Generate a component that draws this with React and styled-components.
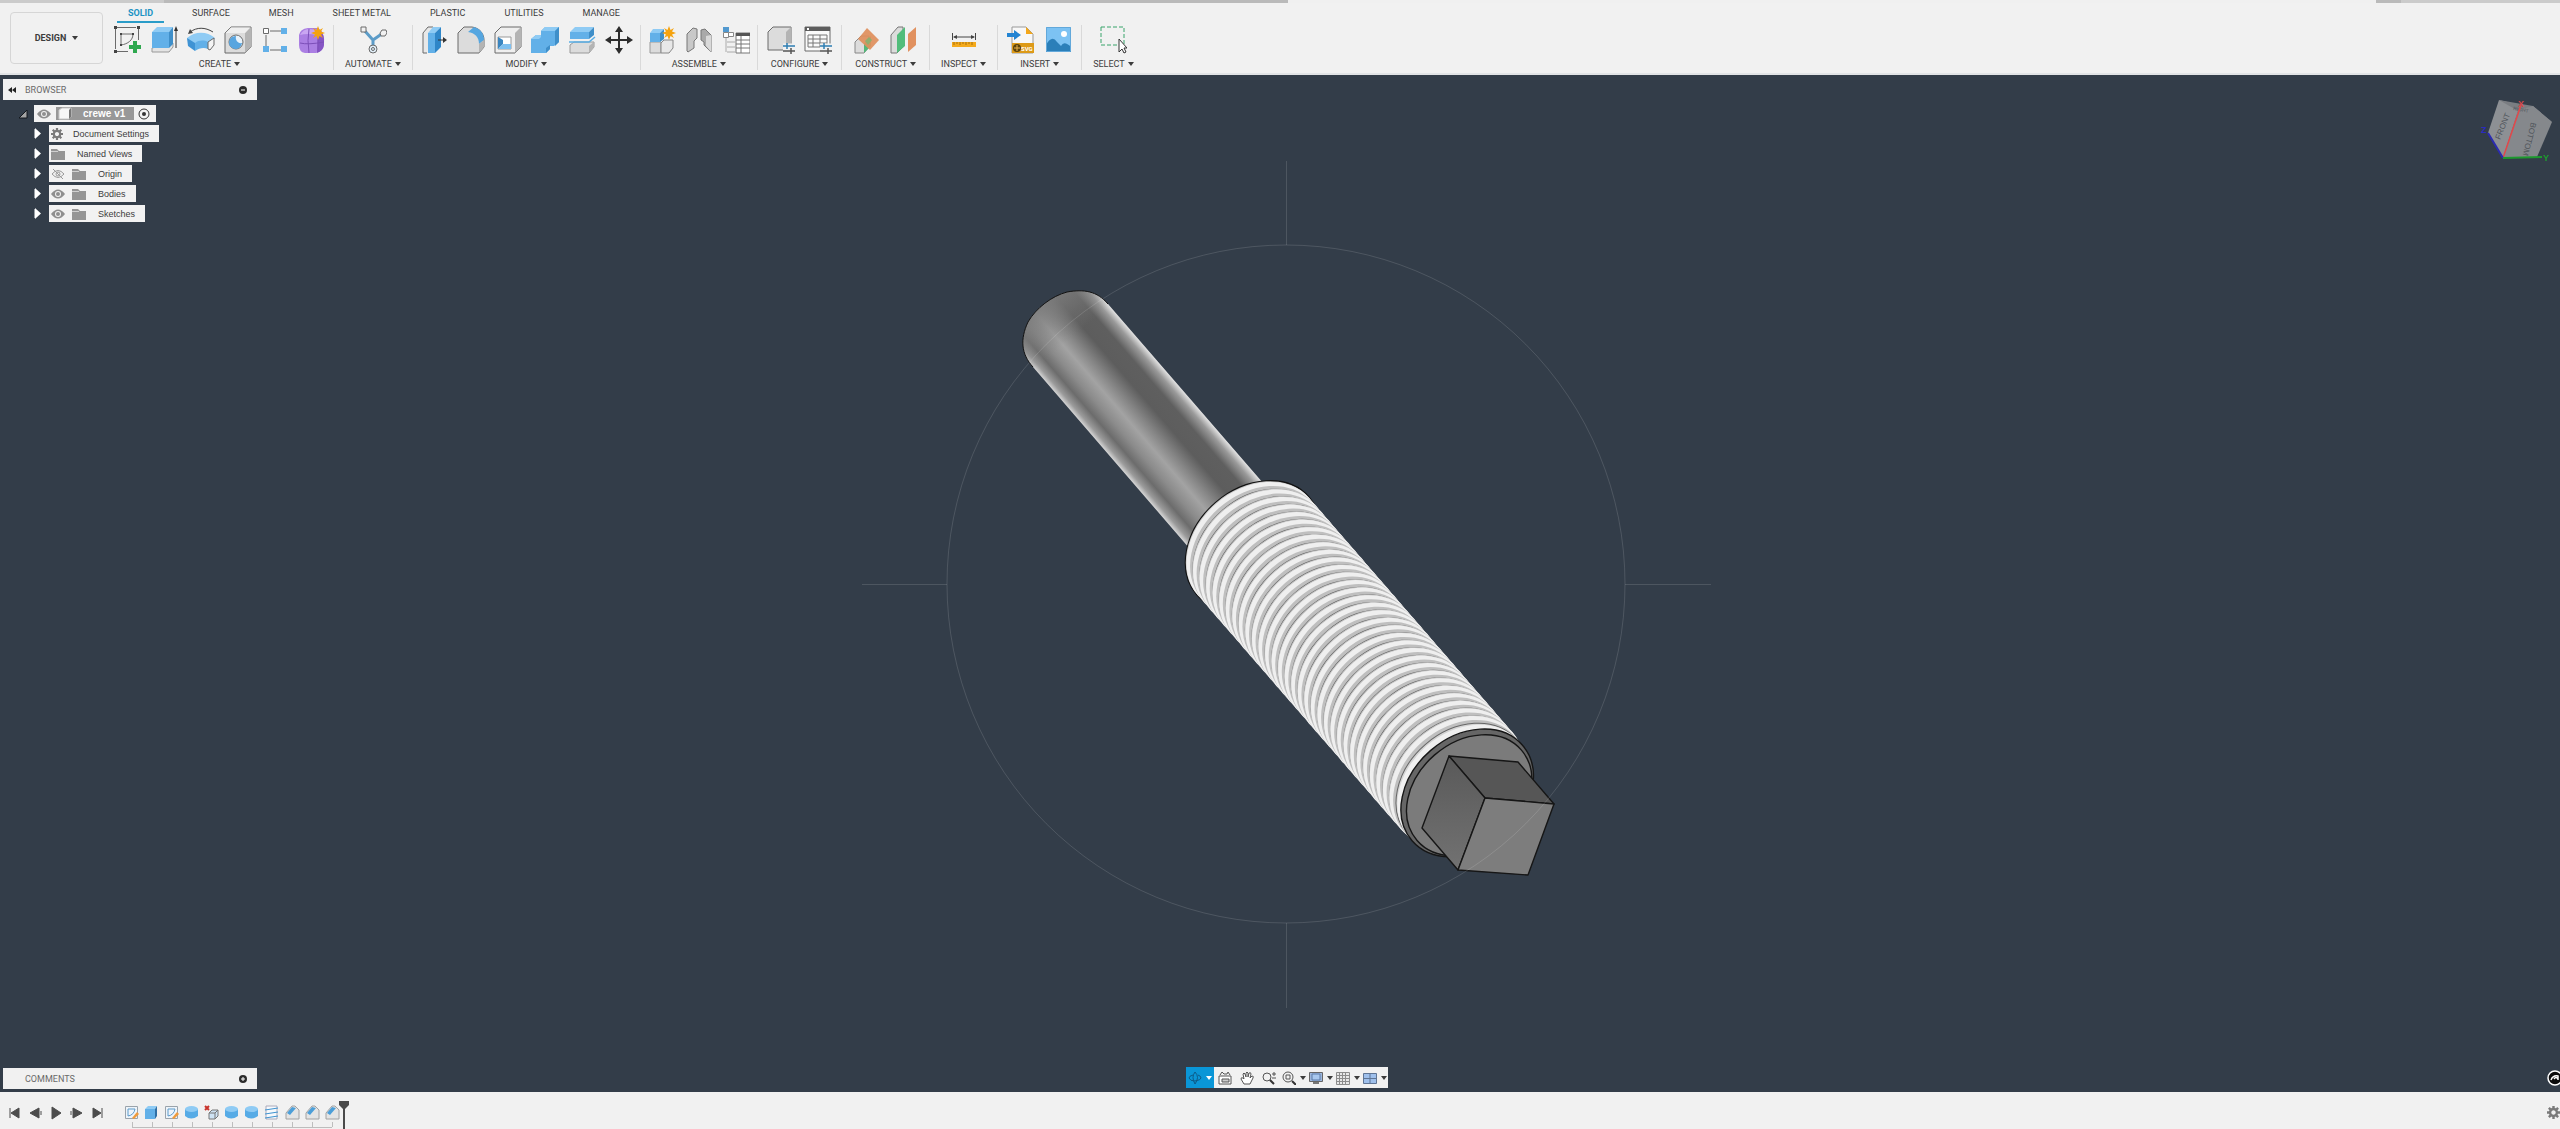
import { useState } from "react";
import styled, { createGlobalStyle, css } from "styled-components";

const GlobalStyle = createGlobalStyle`
  * {
    box-sizing: border-box;
  }
  html, body, #root {
    height: 100%;
    margin: 0;
  }
  body {
    overflow: hidden;
    font-family: Roboto, "Liberation Sans", sans-serif;
    font-size: 9px;
    color: #3c3c3c;
  }
  button {
    font: inherit;
    color: inherit;
    background: none;
    border: none;
    padding: 0;
    margin: 0;
    cursor: pointer;
  }
  svg {
    display: block;
    flex-shrink: 0;
  }
`;

const Shell = styled.div`
  display: flex;
  flex-direction: column;
  height: 100vh;
  background: #333d49;
`;

/* ---------- toolbar ---------- */

const TitleStrip = styled.div`
  display: flex;
  height: 3px;
  background: #f0f0f0;
`;
const StripPart = styled.div`
  width: ${({ $width }) => $width};
  margin-left: ${({ $push }) => ($push ? "auto" : "0")};
  background: ${({ $light }) => ($light ? "#cbcbcb" : "#bababa")};
`;

const Toolbar = styled.header`
  display: flex;
  height: 72px;
  background: #f1f1f1;
  border-bottom: 2px solid #e2e4e6;
`;

const WorkspaceButton = styled.button`
  display: flex;
  align-items: center;
  justify-content: center;
  gap: 6px;
  width: 93px;
  height: 52px;
  margin: 9px 2px 0 10px;
  border: 1px solid #d6d6d6;
  border-radius: 4px;
  font-weight: 700;
`;

const Caret = styled.span`
  display: inline-block;
  border: 3px solid transparent;
  border-top: 4px solid ${({ $light }) => ($light ? "#fff" : "#3c3c3c")};
  border-bottom: none;
`;

const Ribbon = styled.div`
  display: flex;
  flex-direction: column;
`;
const Tabs = styled.nav`
  display: flex;
  gap: 17px;
  height: 20px;
  padding-left: 12px;
`;
const Tab = styled.button`
  padding: 2px 11px 0;
  height: 20px;
  border-bottom: 2px solid transparent;
  ${({ $active }) =>
    $active &&
    css`
      color: #1b93c4;
      font-weight: 700;
      border-color: #2a9cc8;
    `}
`;

const Groups = styled.div`
  display: flex;
  height: 47px;
  padding: 2px 0 0 1px;
`;
const Group = styled.section`
  display: flex;
  flex-direction: column;
  align-items: center;
  justify-content: space-between;
  padding: 0 ${({ $pair }) => ($pair ? "9px" : "7px")};
  border-right: 1px solid ${({ $last }) => ($last ? "transparent" : "#d9d9d9")};
`;
const Tools = styled.div`
  display: flex;
  gap: 9px;
`;
const Tool = styled.button`
  width: 28px;
  height: 30px;
`;
const GroupLabel = styled.button`
  display: flex;
  align-items: center;
  gap: 3px;
  height: 13px;
  padding: 0 4px;
`;

/* ---------- viewport ---------- */

const Viewport = styled.main`
  position: relative;
  flex: 1;
  min-height: 0;
  display: flex;
  align-items: center;
  justify-content: center;
  padding-left: 12px;
  overflow: hidden;
`;

const BrowserPane = styled.aside`
  position: absolute;
  top: 4px;
  left: 3px;
  width: 254px;
`;
const PanelBar = styled.div`
  display: flex;
  align-items: center;
  justify-content: space-between;
  height: 21px;
  padding: 0 10px 0 4px;
  background: #f1f1f1;
  color: #6a6a6a;
`;
const PanelTitle = styled.div`
  display: flex;
  align-items: center;
  gap: 8px;
`;
const CommentsBar = styled(PanelBar)`
  position: absolute;
  left: 3px;
  bottom: 3px;
  width: 254px;
`;

const Tree = styled.ul`
  display: flex;
  flex-direction: column;
  gap: 3px;
  margin: 5px 0 0;
  padding: 0;
  list-style: none;
  font: 9px "Liberation Sans", sans-serif;
`;
const Row = styled.li`
  display: flex;
  align-items: center;
  gap: ${({ $root }) => ($root ? "6px" : "7px")};
  padding-left: ${({ $root }) => ($root ? "15px" : "30px")};
`;
const Node = styled.div`
  display: flex;
  align-items: center;
  gap: 7px;
  height: 17px;
  padding: 0 8px 0 2px;
  background: #f2f2f2;
`;
const NodeName = styled.span`
  padding: ${({ $wide }) => ($wide ? "0 2px 0 5px" : "0 2px 0 3px")};
`;
const RootNode = styled(Node)`
  gap: 4px;
  padding: 0 6px 0 3px;
`;
const RootName = styled.span`
  display: flex;
  align-items: center;
  gap: 11px;
  height: 13px;
  margin-left: 1px;
  padding: 0 9px 0 2px;
  background: #989898;
  color: #fff;
  font-size: 10px;
  font-weight: 700;
`;

const CubeBox = styled.div`
  position: absolute;
  top: 15px;
  right: 0;
`;

const NavBar = styled.div`
  position: absolute;
  bottom: 4px;
  left: calc(50% - 94px);
  display: flex;
  height: 21px;
  background: #f1f1f1;
`;
const NavButton = styled.button`
  display: flex;
  align-items: center;
  justify-content: center;
  gap: 4px;
  height: 21px;
  width: ${({ $menu }) => ($menu ? "27px" : "22px")};
  ${({ $active }) =>
    $active &&
    css`
      width: 28px;
      background: #0a96d7;
    `}
`;
const HelpBadge = styled.button`
  position: absolute;
  right: -3px;
  bottom: 6px;
`;

/* ---------- timeline ---------- */

const Timeline = styled.footer`
  display: flex;
  align-items: flex-start;
  height: 37px;
  background: #f1f1f1;
`;
const Playback = styled.div`
  display: flex;
  gap: 5px;
  padding: 13px 0 0 6px;
`;
const Features = styled.div`
  display: flex;
  flex-direction: column;
  gap: 2px;
  margin-left: 18px;
  padding-top: 13px;
`;
const FeatureRow = styled.div`
  display: flex;
  gap: 4px;
`;
const Marker = styled.div`
  margin: 9px 0 0 -2px;
`;
const SettingsButton = styled.button`
  margin: 14px 0 0 auto;
`;

/* ---------- icons ---------- */

const BLUE = "#62b0e8";
const BLUE_TOP = "#8fcbf4";
const BLUE_SIDE = "#3f8fc9";
const GREY = "#dcdcdc";
const GREY_SIDE = "#b4b4b4";
const LINE = "#6b6b6b";

const Star = ({ x, y }) => (
  <path
    transform={`translate(${x} ${y})`}
    fill="#f5a30f"
    d="M0-7 1.500-3 5-5 3-1.500 7 0 3 1.500 5 5 1.500 3 0 7-1.500 3-5 5-3 1.500-7 0-3-1.500-5-5-1.500-3Z"
  />
);

const Sliders = () => (
  <g strokeWidth="1.5">
    <path stroke="#f1f1f1" strokeWidth="5" d="M16 20H28M16 25H28" />
    <path stroke="#2e7eb2" d="M16 20H28M20 17v6" />
    <path stroke="#555" d="M16 25H28M24 22v6" />
  </g>
);

const icons = {
  sketch: (
    <>
      <path d="M4 1.500H23M2.500 3V23M4 25.500H15M25.500 3V14" stroke={LINE} fill="none" />
      <path d="M1 0h3v3H1zM24 0h3v3h-3zM1 24h3v3H1z" fill="#444" />
      <path d="M8 8H20C20 14 15 18 8 19Z" fill="none" stroke={LINE} />
      <path d="M7 7h2v2H7zM19 7h2v2h-2zM7 18h2v2H7z" fill="#444" />
      <path d="M20 15h4v4h4v4h-4v4h-4v-4h-4v-4h4z" fill="#2fa84f" />
    </>
  ),
  extrude: (
    <>
      <path d="M2 22 2 26H19L23 21V17Z" fill="#e4e4e4" stroke="#999" />
      <path d="M2 6H19V22H2Z" fill={BLUE} />
      <path d="M2 6 7 1H23L19 6Z" fill={BLUE_TOP} />
      <path d="M19 6 23 1V18L19 22Z" fill={BLUE_SIDE} />
      <path d="M26 4V22" stroke="#333" />
      <path d="M26 0 28 5H24Z" fill="#333" />
    </>
  ),
  revolve: (
    <>
      <path d="M3 6C10 1 18 1 26 6" fill="none" stroke="#444" />
      <path d="M1 8 3 3 6 7Z" fill="#444" />
      <path d="M0 12C8 5 20 5 28 12L26 15 20 20C16 17 11 17 8 20L1 15Z" fill={BLUE_TOP} />
      <path d="M0 12 8 17V25L1 20Z" fill="#3f93d4" />
      <path d="M8 17C12 14 17 14 21 16V23C17 21 12 22 8 25Z" fill={BLUE} />
      <path d="M21 16 27 12V19L23 24 21 23Z" fill="#f4f4f4" stroke={LINE} />
    </>
  ),
  hole: (
    <>
      <path d="M1 7 7 1H27V21L21 27H1Z" fill={GREY} stroke={LINE} />
      <path d="M21 7 27 1V21L21 27Z" fill={GREY_SIDE} />
      <path d="M1.500 7 7 1.500H26L21 7Z" fill="#efefef" />
      <circle cx="12" cy="16" r="7" fill="#e8f2fa" stroke={LINE} />
      <path d="M12 10A6.500 6.500 0 1 0 18 17C14 18 11 14 12 10Z" fill="#58a5df" />
    </>
  ),
  pattern: (
    <>
      <path d="M9 5H20M5 9V20M9 24H20" stroke={LINE} />
      <path d="M2.500 2.500h5v5h-5z" fill="#fff" stroke={LINE} />
      <path d="M20 2h6v6h-6zM2 20h6v6H2zM20 20h6v6h-6z" fill={BLUE} />
    </>
  ),
  form: (
    <>
      <path d="M1 9Q2 3 10 2H20Q27 6 26 18 26 25 18 27H7Q1 26 1 19Z" fill="#ab7fe3" />
      <path d="M20 8Q26 5 26 14V19Q25 25 19 27Z" fill="#8656c4" />
      <path d="M2 9Q5 3 11 3L21 4 19 9Q9 7 2 9Z" fill="#c9a6f2" />
      <path d="M2 17Q10 19 26 16M11 3Q9 14 11 27M20 8V26" stroke="#7c4fb8" fill="none" />
      <Star x={20} y={7} />
    </>
  ),
  automate: (
    <>
      <path d="M5 4 14 14 24 7M14 14V20" fill="none" stroke="#5c9cc8" strokeWidth="3" />
      <path d="M2 1h5v5H2zM21 7l2-3h4l1 3-2 3h-4z" fill="#f1f1f1" stroke={LINE} />
      <circle cx="14" cy="23" r="4" fill="#e0eef8" stroke={LINE} />
      <circle cx="14" cy="23" r="1.500" fill="none" stroke={LINE} />
    </>
  ),
  pressPull: (
    <>
      <path d="M7 27H3V7L8 1H13" fill="#e8e8e8" stroke={LINE} />
      <path d="M8 7H15V27H8Z" fill={BLUE} />
      <path d="M8 7 13 1H21L15 7Z" fill={BLUE_TOP} />
      <path d="M15 7 21 1V21L15 27Z" fill="#2f86c8" />
      <path d="M18 14H25" stroke="#333" />
      <path d="M27 14 23 11V17Z" fill="#333" />
    </>
  ),
  fillet: (
    <>
      <path d="M1 7 7 1H15C23 2 27 8 27 14V21L22 27H1Z" fill={GREY} stroke={LINE} />
      <path d="M11 6 17 1C24 3 27 8 27 14L22 18C22 11 18 7 11 6Z" fill="#55a6e0" />
      <path d="M22 18 27 14V21L22 27Z" fill={GREY_SIDE} />
    </>
  ),
  shell: (
    <>
      <path d="M1 7 7 1H27V21L21 27H1Z" fill="#efefef" stroke={LINE} />
      <path d="M21 7 27 1V21L21 27Z" fill={GREY_SIDE} />
      <path d="M4 11H17V23H4Z" fill="#fff" stroke="#999" />
      <path d="M4 11 9 14V18L4 23Z" fill="#3b86c0" />
      <path d="M4 23 9 18H17V23Z" fill="#7fc0ef" />
    </>
  ),
  combine: (
    <>
      <path d="M10 5 14 1H28V16L23 20H19V23L15 27H0V13L5 9H10Z" fill={BLUE} />
      <path d="M10 5 14 1H28L24 5ZM0 13 5 9H10V11L8 13Z" fill={BLUE_TOP} />
      <path d="M24 5 28 1V16L24 20ZM15 22 19 19V23L15 27Z" fill={BLUE_SIDE} />
    </>
  ),
  split: (
    <>
      <path d="M2 19 6 16H26V21L21 27H2Z" fill={GREY} stroke="#999" />
      <path d="M21 20 26 16V21L21 27Z" fill={GREY_SIDE} />
      <path d="M2 6H21V13H2Z" fill={BLUE} />
      <path d="M2 6 7 1H26L21 6Z" fill={BLUE_TOP} />
      <path d="M21 6 26 1V9L21 13Z" fill={BLUE_SIDE} />
      <path d="M1 16H21L27 11" fill="none" stroke="#58aee6" strokeWidth="1.500" />
    </>
  ),
  move: (
    <>
      <path d="M14 4V24M4 14H24" stroke="#2d2d2d" strokeWidth="2" />
      <path d="M14 0 18 6H10ZM14 28 10 22H18ZM0 14 6 10V18ZM28 14 22 18V10Z" fill="#2d2d2d" />
    </>
  ),
  component: (
    <>
      <path d="M2 16H13V27H2Z" fill={GREY} stroke="#999" />
      <path d="M13 17 16 14H25V22L21 27H13Z" fill="#e8e8e8" stroke="#888" />
      <path d="M2 7H12V16H2Z" fill={BLUE} />
      <path d="M2 7 5 3H16L12 7Z" fill={BLUE_TOP} />
      <path d="M12 7 16 3V13L12 16Z" fill={BLUE_SIDE} />
      <Star x={21} y={7} />
    </>
  ),
  joint: (
    <>
      <path d="M2 8 8 2 12 3V12L9 15V22L3 26 2 25Z" fill="#c8c8c8" stroke="#777" />
      <path d="M26 9 20 3 16 4V14L19 16V19L26 26Z" fill="#a9a9a9" stroke="#777" />
      <path d="M21 10 26 9V26L21 20Z" fill="#d9d9d9" />
    </>
  ),
  asBuilt: (
    <>
      <path d="M1 1h6v5H1z" fill="#5299cf" />
      <path d="M1.500 6.500h5v5h-5zM6.500 6.500h5v4h-5z" fill="#fff" stroke="#888" />
      <path d="M4 12V26M5 16H13M5 21H13M5 26H13" stroke="#aaa" />
      <path d="M14 7H28V27H14Z" fill="#fff" stroke="#777" />
      <path d="M14 7H28V10H14Z" fill="#555" />
      <path d="M14 14H28M14 18H28M14 22H28M19 10V27" stroke="#777" />
    </>
  ),
  configure: (
    <>
      <path d="M1 6 6 1H24V19L19 24H1Z" fill={GREY} stroke={LINE} />
      <path d="M19 6 24 1V19L19 24Z" fill={GREY_SIDE} />
      <Sliders />
    </>
  ),
  configTable: (
    <>
      <path d="M1 1H26V25H1Z" fill="#fafafa" stroke={LINE} />
      <path d="M1 1H26V5H1Z" fill="#5d5d5d" />
      <path d="M4 9H23V21H4ZM4 13H23M4 17H23M9 9V21M16 9V21" fill="none" stroke="#777" />
      <path d="M3 2h2v2H3z" fill="#fff" />
      <Sliders />
    </>
  ),
  plane: (
    <>
      <path d="M2 16 8 10H16V21L11 27H2Z" fill={GREY} stroke="#888" />
      <path d="M11 18 18 10V20L11 27Z" fill="#52b878" />
      <path d="M5 13 14 2 26 14 17 24Z" fill="#e08f5c" opacity=".92" />
      <path d="M12 15 16 11 19 14 15 19Z" fill="#8fae6e" />
    </>
  ),
  midplane: (
    <>
      <path d="M1 9 8 1H13V21L7 27H1Z" fill={GREY} stroke="#777" />
      <path d="M7 9 15 1V20L7 27Z" fill="#52bd7b" />
      <path d="M18 8 26 1V19L18 26Z" fill="#e1915f" />
    </>
  ),
  measure: (
    <>
      <path d="M2.500 7V14M25.500 7V14M4 11H24" stroke="#444" />
      <path d="M3 11 7 9V13ZM25 11 21 9V13Z" fill="#444" />
      <path d="M2 16H26V21H2Z" fill="#f4aa1c" />
      <path d="M4 16v3M7 16v2M10 16v3M13 16v2M16 16v3M19 16v2M22 16v3" stroke="#a8700a" />
    </>
  ),
  insertSvg: (
    <>
      <path d="M5 1H19L26 8V27H5Z" fill="#f8f8f8" stroke="#999" />
      <path d="M19 1 26 8H19Z" fill="#f4a81c" />
      <path d="M0 7H7V4L14 9 7 14V11H0Z" fill="#2384d2" />
      <path d="M5 17H27V27H5Z" fill="#dd9a18" />
      <circle cx="10" cy="22" r="4" fill="#5b430d" />
      <path d="M7 22H13M10 19V25" stroke="#eeb347" />
      <text x="14" y="25" fontSize="6" fontWeight="700" fill="#fff" fontFamily="Roboto, sans-serif">
        SVG
      </text>
    </>
  ),
  canvas: (
    <>
      <path d="M2 1H27V26H2Z" fill="#7cc2f3" />
      <circle cx="20" cy="8" r="3" fill="#fff" />
      <path d="M2 19Q8 8 13 16L17 20Q20 14 27 21V26H2Z" fill="#2b7fb9" />
      <path d="M2.500 1.500H26.500V25.500H2.500Z" fill="none" stroke="#62a8da" />
    </>
  ),
  select: (
    <>
      <path d="M2 1H25V19H2Z" fill="none" stroke="#38a46b" strokeDasharray="4 2" />
      <path d="M20 13V26L23 23 25 27 27 26 25 22H28Z" fill="#fff" stroke="#333" />
    </>
  ),
};

const groups = [
  ["CREATE", ["sketch", "extrude", "revolve", "hole", "pattern", "form"]],
  ["AUTOMATE", ["automate"]],
  ["MODIFY", ["pressPull", "fillet", "shell", "combine", "split", "move"]],
  ["ASSEMBLE", ["component", "joint", "asBuilt"]],
  ["CONFIGURE", ["configure", "configTable"]],
  ["CONSTRUCT", ["plane", "midplane"]],
  ["INSPECT", ["measure"]],
  ["INSERT", ["insertSvg", "canvas"]],
  ["SELECT", ["select"]],
];

const tabs = ["SOLID", "SURFACE", "MESH", "SHEET METAL", "PLASTIC", "UTILITIES", "MANAGE"];

const Eye = ({ off }) => (
  <svg width="14" height="12" viewBox="0 0 14 12">
    {off ? (
      <g fill="none" stroke="#9a9a9a">
        <path d="M1 6Q7-1 13 6 7 13 1 6Z" />
        <circle cx="7" cy="6" r="2" />
        <path d="M2 1 12 11" />
      </g>
    ) : (
      <>
        <path d="M0 6Q7-3 14 6 7 15 0 6Z" fill="#8f8f8f" />
        <circle cx="7" cy="6" r="3" fill="#f2f2f2" />
        <circle cx="7" cy="6" r="2" fill="#8f8f8f" />
      </>
    )}
  </svg>
);

const Folder = () => (
  <svg width="14" height="12" viewBox="0 0 14 12">
    <path d="M0 1H6L8 3H14V12H0Z" fill="#959595" />
    <path d="M0 3.500H7" stroke="#d0d0d0" />
  </svg>
);

const Gear = ({ size = 12, color = "#7a7a7a" }) => (
  <svg width={size} height={size} viewBox="-7 -7 14 14">
    <circle r="3.700" fill="none" stroke={color} strokeWidth="2.600" />
    <g stroke={color} strokeWidth="2.600">
      <path d="M0-7V-4M0 7V4M-7 0H-4M7 0H4M-5-5-3-3M5 5 3 3M-5 5-3 3M5-5 3-3" />
    </g>
  </svg>
);

const Disclosure = ({ open }) =>
  open ? (
    <svg width="10" height="10" viewBox="0 0 10 10">
      <path d="M1 9H9V1Z" fill="#a4a4a4" stroke="#15191e" />
    </svg>
  ) : (
    <svg width="9" height="11" viewBox="0 0 9 11">
      <path d="M1.500 1V10" stroke="#9aa0a6" />
      <path d="M2 0 8 5.500 2 11Z" fill="#fff" />
    </svg>
  );

const Dot = ({ plus }) => (
  <svg width="8" height="8" viewBox="0 0 8 8">
    <circle cx="4" cy="4" r="4" fill="#2b2b2b" />
    <path d={plus ? "M2 4H6M4 2V6" : "M2 4H6"} stroke="#fff" />
  </svg>
);

const nodes = [
  { name: "Document Settings", icons: <Gear /> },
  { name: "Named Views", icons: <Folder /> },
  { name: "Origin", icons: <><Eye off /><Folder /></> },
  { name: "Bodies", icons: <><Eye /><Folder /></> },
  { name: "Sketches", icons: <><Eye /><Folder /></> },
];

const navItems = [
  {
    label: "Orbit",
    active: true,
    menu: true,
    art: (
      <g fill="none" stroke="#0d5b87">
        <path d="M7 1Q12 6 7 13 3 6 7 1Z" />
        <path d="M5 4Q1 5 1 7 2 10 7 10 13 9 13 7 13 5 10 4" />
      </g>
    ),
  },
  {
    label: "Look at",
    art: (
      <>
        <path d="M1 5H13V13H1Z" fill="#fff" stroke="#555" />
        <path d="M4 8H11V11H4Z" fill="#ccc" stroke="#555" />
        <path d="M2 4 4 1 6 3H9L10 1 12 4" fill="none" stroke="#555" />
      </>
    ),
  },
  {
    label: "Pan",
    art: (
      <path
        d="M4 13 1 8Q1 6 3 7L4 8 3 3Q4 1 5 3L6 6V2Q7 0 8 2V6L9 2Q11 1 11 3L10 7 12 5Q14 5 13 7L10 13Z"
        fill="#fff"
        stroke="#555"
      />
    ),
  },
  {
    label: "Zoom",
    art: (
      <>
        <circle cx="5" cy="6" r="4" fill="none" stroke="#555" />
        <path d="M8 9 12 13" stroke="#333" strokeWidth="2" />
        <path d="M10 3H14M12 1V5M10 7H14" stroke="#555" />
      </>
    ),
  },
  {
    label: "Fit",
    menu: true,
    art: (
      <>
        <circle cx="6" cy="6" r="5" fill="none" stroke="#555" />
        <path d="M4 4H8V8H4Z" fill="none" stroke="#555" />
        <path d="M10 10 14 14" stroke="#333" strokeWidth="2" />
      </>
    ),
  },
  {
    label: "Display settings",
    menu: true,
    art: (
      <>
        <path d="M0.500 1.500H13.500V10.500H0.500Z" fill="#9db7dd" stroke="#666" />
        <path d="M3 3H11V9H3Z" fill="#a9c8ee" stroke="#5b7ba8" />
        <path d="M4 13H10V11H4Z" fill="#777" />
      </>
    ),
  },
  {
    label: "Grid and snaps",
    menu: true,
    art: (
      <path
        d="M.5 1.500H13.500V13.500H.5ZM.5 4.500H13.500M.5 7.500H13.500M.5 10.500H13.500M3.500 1V13M6.500 1V13M9.500 1V13"
        fill="#e8e8e8"
        stroke="#8c8c8c"
      />
    ),
  },
  {
    label: "Viewports",
    menu: true,
    art: (
      <path d="M.5 2.500H13.500V12.500H.5ZM7 2V12M0 7.500H14" fill="#9fc0ec" stroke="#5f7595" />
    ),
  },
];

const playback = [
  ["Go to start", "M4 3V13M13 3V13L5 8Z"],
  ["Step back", "M12 3V13L3 8ZM14 6V10"],
  ["Play", "M4 2V14L13 8Z"],
  ["Step forward", "M4 3V13L13 8ZM2 6V10"],
  ["Go to end", "M12 3V13M3 3V13L11 8Z"],
];

const featureArt = {
  sketch: (
    <>
      <path d="M1.500 1.500H13.500V13.500H1.500Z" fill="#eef4fa" stroke="#9aa3ab" />
      <path d="M4 4H11Q10 10 4 11Z" fill="none" stroke="#5d9bcb" />
      <path d="M8 13 13 7 15 9 10 14Z" fill="#ef9b3d" />
    </>
  ),
  extrude: (
    <>
      <path d="M1 4H11V14H1Z" fill={BLUE} />
      <path d="M1 4 4 1H13L11 4Z" fill={BLUE_TOP} />
      <path d="M11 4 13 1V11L11 14Z" fill="#2f6fa5" />
    </>
  ),
  body: (
    <>
      <path d="M1 4V11Q7 16 14 11V4Z" fill="#56abe6" />
      <ellipse cx="7.500" cy="4" rx="6.500" ry="3" fill="#8fcbf4" />
    </>
  ),
  remove: (
    <>
      <path d="M1 1 5 5M5 1 1 5" stroke="#c8322b" strokeWidth="2" />
      <path d="M5 8 8 5H14V11L11 14H5Z" fill="#cfe3f4" stroke="#777" />
      <path d="M5 8H11V14M11 8 14 5" fill="none" stroke="#777" />
    </>
  ),
  thread: (
    <>
      <path d="M2 1H13V14H2Z" fill="#f6f9fc" stroke="#aab" />
      <path d="M1 5 14 3M1 9 14 7M1 13 14 11" stroke="#3f93d0" />
    </>
  ),
  chamfer: (
    <>
      <path d="M2 8 8 1H11L15 5V14H2Z" fill="#e4e4e4" stroke="#a2a2a2" />
      <path d="M3 8 8 2 12 3 6 10Z" fill="#4d9fd8" />
    </>
  ),
};

const features = [
  "sketch", "extrude", "sketch", "body", "remove", "body", "body", "thread", "chamfer", "chamfer", "chamfer",
];

/* ---------- model ---------- */

const AXIS = { x: 0.655, y: 0.755 };
const TILT = -41;

const Disc = ({ at, a, b, ...rest }) => {
  const x = 1253 + AXIS.x * at;
  const y = 546 + AXIS.y * at;
  return <ellipse cx={x} cy={y} rx={a} ry={b} transform={`rotate(${TILT} ${x} ${y})`} {...rest} />;
};

const PITCH = 10;
const turns = Array.from({ length: 32 }, (_, i) => i * PITCH);

const TIP = "M1033 367C1021 354 1020 339 1028 322C1036 308 1052 296 1067 292C1084 289 1097 291 1108 304";

const Model = () => (
  <svg width="860" height="860" viewBox="856 154 860 860" role="img" aria-label="Threaded rod">
    <defs>
      <linearGradient id="shaft" gradientUnits="userSpaceOnUse" x1="1033" y1="367" x2="1107" y2="303">
        <stop offset="0" stopColor="#d4d4d4" />
        <stop offset=".05" stopColor="#9b9b9b" />
        <stop offset=".14" stopColor="#6c6c6c" />
        <stop offset=".25" stopColor="#8b8b8b" />
        <stop offset=".38" stopColor="#a3a3a3" />
        <stop offset=".5" stopColor="#858585" />
        <stop offset=".65" stopColor="#5d5d5d" />
        <stop offset=".82" stopColor="#5f5f5f" />
        <stop offset=".93" stopColor="#9a9a9a" />
        <stop offset="1" stopColor="#e2e2e2" />
      </linearGradient>
      <linearGradient id="shaftTip" gradientUnits="userSpaceOnUse" x1="1042" y1="303" x2="1072" y2="338">
        <stop offset="0" stopColor="#7c7c7c" stopOpacity=".9" />
        <stop offset="1" stopColor="#7c7c7c" stopOpacity="0" />
      </linearGradient>
      <linearGradient id="side" x1="0" y1="0" x2="0" y2="1">
        <stop offset="0" stopColor="#595959" />
        <stop offset="1" stopColor="#727272" />
      </linearGradient>
    </defs>

    <path d={`${TIP}L1270 491 1196 556Z`} fill="url(#shaft)" />
    <path d={`${TIP}L1122 320 1045 381Z`} fill="url(#shaftTip)" />
    <path d={TIP} fill="none" stroke="#111" />

    <Disc at={0} a={74} b={57} fill="#eee" stroke="#111" strokeWidth="2" />
    {turns.map((t) => (
      <g key={t}>
        <Disc at={t} a={74} b={57} fill="#c6c6c6" />
        <Disc at={t + 1} a={74} b={57} fill="#efefef" />
        <Disc at={t + 5} a={73} b={56} fill="#bfbfbf" />
        <Disc at={t + 8} a={72} b={55} fill="#d4d4d4" stroke="#666" />
      </g>
    ))}
    <Disc at={322} a={73} b={57} fill="#f0f0f0" />
    <Disc at={327} a={73} b={56} fill="#666" stroke="#161616" strokeWidth="1.400" />
    <Disc at={330} a={69} b={53} fill="#7b7b7b" stroke="#161616" strokeWidth="1.400" />

    <g stroke="#161616" strokeWidth="1.400" strokeLinejoin="round">
      <path d="M1449 756 1518 762 1554 804 1485 798Z" fill="#565656" />
      <path d="M1449 756 1485 798 1458 870 1422 828Z" fill="url(#side)" />
      <path d="M1485 798 1554 804 1528 875 1458 870Z" fill="#7d7d7d" />
    </g>

    <g fill="none" stroke="#fff" strokeOpacity=".13">
      <circle cx="1286" cy="584" r="339" />
      <path d="M1286.500 161V245M1286.500 923V1008M862 584.500H947M1625 584.500H1711" />
    </g>
  </svg>
);

const ViewCube = () => (
  <svg width="80" height="80" viewBox="0 0 80 80" role="img" aria-label="View cube">
    <path d="M19 10 40 15 23 68 8 43Z" fill="#8d9094" />
    <path d="M19 10 53 16 72 32 40 22Z" fill="#7a7d82" />
    <path d="M38 20 53 16 72 32 57 67 23 68Z" fill="#85888c" />
    <g fontFamily="Liberation Sans" fill="#50555b" fontSize="9">
      <text transform="translate(20 50) rotate(-68)" fontSize="8">FRONT</text>
      <text transform="translate(51 32) rotate(104)" fontSize="8">BOTTOM</text>
      <text transform="translate(33 20) rotate(10)" fontSize="5">RIGHT</text>
    </g>
    <path d="M23 68 41 15" stroke="#e3474a" strokeWidth="1.500" />
    <path d="M23 68 8 43" stroke="#2b2bb0" strokeWidth="2" />
    <path d="M23 68 62 67" stroke="#1d9a2e" strokeWidth="2" />
    <g fontFamily="Liberation Sans" fontSize="9" fontWeight="700">
      <text x="1" y="43" fill="#2b2bc0">Z</text>
      <text x="38" y="17" fill="#d8484b">X</text>
      <text x="63" y="71" fill="#1d9a2e">Y</text>
    </g>
  </svg>
);

const App = () => {
  const [tab, setTab] = useState("SOLID");

  return (
    <Shell>
      <GlobalStyle />
      <TitleStrip>
        <StripPart $width="6.4%" $light />
        <StripPart $width="1.3%" />
        <StripPart $width="42.6%" />
        <StripPart $width="1%" $push />
        <StripPart $width="6.2%" $light />
      </TitleStrip>
      <Toolbar>
        <WorkspaceButton>
          DESIGN <Caret />
        </WorkspaceButton>
        <Ribbon>
          <Tabs>
            {tabs.map((t) => (
              <Tab key={t} $active={t === tab} onClick={() => setTab(t)}>
                {t}
              </Tab>
            ))}
          </Tabs>
          <Groups>
            {groups.map(([label, tools], i) => (
              <Group key={label} $pair={tools.length === 2} $last={i === groups.length - 1}>
                <Tools>
                  {tools.map((name) => (
                    <Tool key={name} aria-label={name}>
                      <svg width="28" height="28" viewBox="0 0 28 28">
                        {icons[name]}
                      </svg>
                    </Tool>
                  ))}
                </Tools>
                <GroupLabel>
                  {label} <Caret />
                </GroupLabel>
              </Group>
            ))}
          </Groups>
        </Ribbon>
      </Toolbar>

      <Viewport>
        <Model />

        <BrowserPane>
          <PanelBar>
            <PanelTitle>
              <svg width="10" height="8" viewBox="0 0 10 8">
                <path d="M5 1V7L1 4ZM9 1V7L5 4Z" fill="#222" />
              </svg>
              BROWSER
            </PanelTitle>
            <button aria-label="Hide browser">
              <Dot />
            </button>
          </PanelBar>
          <Tree>
            <Row $root>
              <Disclosure open />
              <RootNode>
                <Eye />
                <RootName>
                  <svg width="14" height="13" viewBox="0 0 14 13">
                    <path d="M1 3 4 1H13V10L11 12H1Z" fill="#f7f7f7" stroke="#c9c9c9" />
                    <path d="M11 3 13 1V10L11 12Z" fill="#777" />
                  </svg>
                  crewe v1
                </RootName>
                <svg width="12" height="12" viewBox="0 0 12 12">
                  <circle cx="6" cy="6" r="5" fill="none" stroke="#333" />
                  <circle cx="6" cy="6" r="2" fill="#333" />
                </svg>
              </RootNode>
            </Row>
            {nodes.map((node) => (
              <Row key={node.name}>
                <Disclosure />
                <Node>
                  {node.icons}
                  <NodeName $wide={node.name !== "Document Settings"}>{node.name}</NodeName>
                </Node>
              </Row>
            ))}
          </Tree>
        </BrowserPane>

        <CubeBox>
          <ViewCube />
        </CubeBox>

        <CommentsBar>
          <PanelTitle>
            <svg width="10" height="8" />
            COMMENTS
          </PanelTitle>
          <button aria-label="Show comments">
            <Dot plus />
          </button>
        </CommentsBar>

        <NavBar>
          {navItems.map((item) => (
            <NavButton key={item.label} aria-label={item.label} $active={item.active} $menu={item.menu}>
              <svg width="14" height="14" viewBox="0 0 14 14">
                {item.art}
              </svg>
              {item.menu && <Caret $light={item.active} />}
            </NavButton>
          ))}
        </NavBar>

        <HelpBadge aria-label="Assistant">
          <svg width="16" height="16" viewBox="0 0 16 16">
            <circle cx="8" cy="8" r="7" fill="#0c0c0c" stroke="#fff" strokeWidth="1.500" />
            <path d="M4 10Q6 5 11 6V10M7 9Q9 6 11 9" fill="none" stroke="#fff" strokeWidth="1.500" />
          </svg>
        </HelpBadge>
      </Viewport>

      <Timeline>
        <Playback>
          {playback.map(([label, d]) => (
            <button key={label} aria-label={label}>
              <svg width="16" height="16" viewBox="0 0 16 16">
                <path d={d} fill="#4c4c4c" stroke="#4c4c4c" />
              </svg>
            </button>
          ))}
        </Playback>
        <Features>
          <FeatureRow>
            {features.map((kind, i) => (
              <button key={i} aria-label={kind}>
                <svg width="16" height="15" viewBox="0 0 16 15">
                  {featureArt[kind]}
                </svg>
              </button>
            ))}
          </FeatureRow>
          <svg width="216" height="6" viewBox="0 0 216 6">
            <path
              d={`M8 5.500H208${features.map((_, i) => `M${i * 20 + 8}.500 0V5`).join("")}`}
              stroke="#bdbdbd"
              fill="none"
            />
          </svg>
        </Features>
        <Marker>
          <svg width="12" height="28" viewBox="0 0 12 28">
            <path d="M1 0H11V4L7 8V28H5V8L1 4Z" fill="#4a4a4a" />
          </svg>
        </Marker>
        <SettingsButton aria-label="Timeline settings">
          <Gear size={13} />
        </SettingsButton>
      </Timeline>
    </Shell>
  );
};

export default App;
